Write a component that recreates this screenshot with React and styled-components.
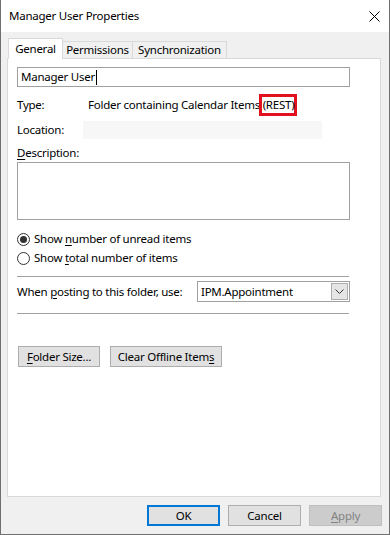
import React from 'react';
import styled, { createGlobalStyle } from 'styled-components';

const Global = createGlobalStyle`
  html, body { margin: 0; padding: 0; }
  body {
    font-family: "Noto Sans", "Liberation Sans", sans-serif;
    font-size: 11.5px;
    letter-spacing: -0.25px;
    color: #000;
    background: #fff;
  }
  * { box-sizing: border-box; }
`;

const Window = styled.div`
  width: 390px;
  height: 535px;
  display: flex;
  flex-direction: column;
  background: #f0f0f0;
  border: 1px solid #707070;
  border-top: none;
`;

const TitleBar = styled.div`
  height: 32px;
  flex: none;
  background: #fff;
  display: flex;
  align-items: center;
  justify-content: space-between;
  padding: 0 9px 0 8px;
`;

const Title = styled.span`
  font-size: 11.5px;
  line-height: 16px;
`;

const Body = styled.div`
  flex: 1;
  display: flex;
  flex-direction: column;
  padding: 6px 8px 0 6px;
`;

const TabRow = styled.div`
  display: flex;
  align-items: flex-end;
  height: 21px;
  padding-left: 1px;
  margin-bottom: -1px;
  position: relative;
  z-index: 1;
`;

const Tab = styled.div`
  width: ${p => p.$w}px;
  height: ${p => (p.$active ? 21 : 17)}px;
  margin-bottom: ${p => (p.$active ? 0 : 1)}px;
  margin-left: ${p => (p.$active ? 0 : -1)}px;
  background: ${p => (p.$active ? '#fff' : '#f0f0f0')};
  border: 1px solid #d9d9d9;
  border-bottom: none;
  display: flex;
  align-items: ${p => (p.$active ? 'flex-start' : 'center')};
  padding-top: ${p => (p.$active ? 2 : 0)}px;
  justify-content: center;
  line-height: 16px;
  white-space: nowrap;
`;

const Panel = styled.div`
  height: 439px;
  flex: none;
  background: #fff;
  border: 1px solid #d9d9d9;
  padding: 0 0 0 9px;
  display: flex;
  flex-direction: column;
  align-items: flex-start;
`;

const TextBox = styled.div`
  width: 333px;
  height: ${p => p.$h || 20}px;
  margin-top: ${p => p.$mt || 0}px;
  border: 1px solid #a0a0a0;
  background: #fff;
  padding: 1px 3px;
  display: flex;
  align-items: center;
  line-height: 16px;
`;

const Caret = styled.span`
  display: inline-block;
  width: 1px;
  height: 15px;
  background: #000;
  margin-left: 1px;
`;

const InfoRow = styled.div`
  display: flex;
  align-items: center;
  height: ${p => p.$h || 16}px;
  margin-top: ${p => p.$mt || 0}px;
  line-height: 16px;
  white-space: nowrap;
`;

const Label = styled.span`
  width: ${p => p.$w}px;
  flex: none;
`;

const ReadOnlyField = styled.div`
  width: 239px;
  height: 18px;
  background: #f7f7f7;
`;

const Highlight = styled.span`
  display: inline-block;
  border: 3px solid #e3101e;
  margin: -3px 0 -3px -4px;
  padding: 0 0 0 1px;
  line-height: 16px;
`;

const Key = styled.u`
  text-decoration: underline;
  text-underline-offset: 2px;
`;

const RadioRow = styled.label`
  display: flex;
  align-items: center;
  gap: 4px;
  height: 16px;
  margin-top: ${p => p.$mt || 0}px;
  line-height: 16px;
  white-space: nowrap;
`;

const RadioCircle = styled.span`
  width: 13px;
  height: 13px;
  border-radius: 50%;
  border: 1px solid #333;
  background: #fff;
  display: flex;
  align-items: center;
  justify-content: center;
  &::after {
    content: '';
    display: ${p => (p.$checked ? 'block' : 'none')};
    width: 7px;
    height: 7px;
    border-radius: 50%;
    background: #333;
  }
`;

const Separator = styled.div`
  width: 332px;
  height: 1px;
  background: #a0a0a0;
  margin-top: ${p => p.$mt || 0}px;
`;

const Combo = styled.div`
  width: 153px;
  height: 21px;
  border: 1px solid #a0a0a0;
  background: #fff;
  display: flex;
  align-items: center;
  justify-content: space-between;
  padding: 0 1px 0 3px;
  line-height: 16px;
`;

const ComboButton = styled.span`
  width: 17px;
  height: 17px;
  background: #e5e5e5;
  border: 1px solid #adadad;
  display: flex;
  align-items: center;
  justify-content: center;
`;

const ButtonRow = styled.div`
  display: flex;
  gap: ${p => p.$gap || 8}px;
  margin-top: ${p => p.$mt || 0}px;
  padding-left: ${p => p.$pl || 0}px;
`;

const Button = styled.div`
  width: ${p => p.$w || 73}px;
  height: 21px;
  display: flex;
  align-items: center;
  justify-content: center;
  line-height: 16px;
  white-space: nowrap;
  background: ${p => (p.$disabled ? '#cccccc' : '#e1e1e1')};
  color: ${p => (p.$disabled ? '#838383' : '#000')};
  border: ${p => (p.$default ? '2px solid #0078d7' : p.$disabled ? '1px solid #bfbfbf' : '1px solid #adadad')};
`;

const Footer = styled.div`
  flex: 1;
  display: flex;
  justify-content: flex-end;
  align-items: flex-start;
  gap: 8px;
  padding-top: 8px;
  margin-right: -1px;
`;

export default function App() {
  return (
    <>
      <Global />
      <Window>
        <TitleBar>
          <Title>Manager User Properties</Title>
          <svg width="11" height="11" viewBox="0 0 11 11">
            <path d="M0.5 0.5 L10.5 10.5 M10.5 0.5 L0.5 10.5" stroke="#000" strokeWidth="1" fill="none" />
          </svg>
        </TitleBar>
        <Body>
          <TabRow>
            <Tab $active $w={55}>General</Tab>
            <Tab $w={71}>Permissions</Tab>
            <Tab $w={95}>Synchronization</Tab>
          </TabRow>
          <Panel>
            <TextBox $mt={8}>
              Manager User<Caret />
            </TextBox>
            <InfoRow $mt={10}>
              <Label $w={71}>Type:</Label>
              <span>Folder containing Calendar Items <Highlight>(REST)</Highlight></span>
            </InfoRow>
            <InfoRow $mt={8} $h={18}>
              <Label $w={66}>Location:</Label>
              <ReadOnlyField />
            </InfoRow>
            <InfoRow $mt={6}>
              <span><Key>D</Key>escription:</span>
            </InfoRow>
            <TextBox $mt={1} $h={58} />
            <RadioRow $mt={11}>
              <RadioCircle $checked />
              <span>Show <Key>n</Key>umber of unread items</span>
            </RadioRow>
            <RadioRow $mt={3}>
              <RadioCircle />
              <span>Show <Key>t</Key>otal number of items</span>
            </RadioRow>
            <Separator $mt={10} />
            <InfoRow $mt={4} $h={21}>
              <Label $w={180}>When <Key>p</Key>osting to this folder, use:</Label>
              <Combo>
                <span>IPM.Appointment</span>
                <ComboButton>
                  <svg width="9" height="5" viewBox="0 0 9 5">
                    <path d="M0.5 0.5 L4.5 4.5 L8.5 0.5" stroke="#333" strokeWidth="1" fill="none" />
                  </svg>
                </ComboButton>
              </Combo>
            </InfoRow>
            <Separator $mt={11} />
            <ButtonRow $mt={32} $gap={10} $pl={1}>
              <Button $w={82}><span><Key>F</Key>older Size...</span></Button>
              <Button $w={112}><span>Clear Offline Item<Key>s</Key></span></Button>
            </ButtonRow>
          </Panel>
          <Footer>
            <Button $default>OK</Button>
            <Button>Cancel</Button>
            <Button $disabled><span><Key>A</Key>pply</span></Button>
          </Footer>
        </Body>
      </Window>
    </>
  );
}
